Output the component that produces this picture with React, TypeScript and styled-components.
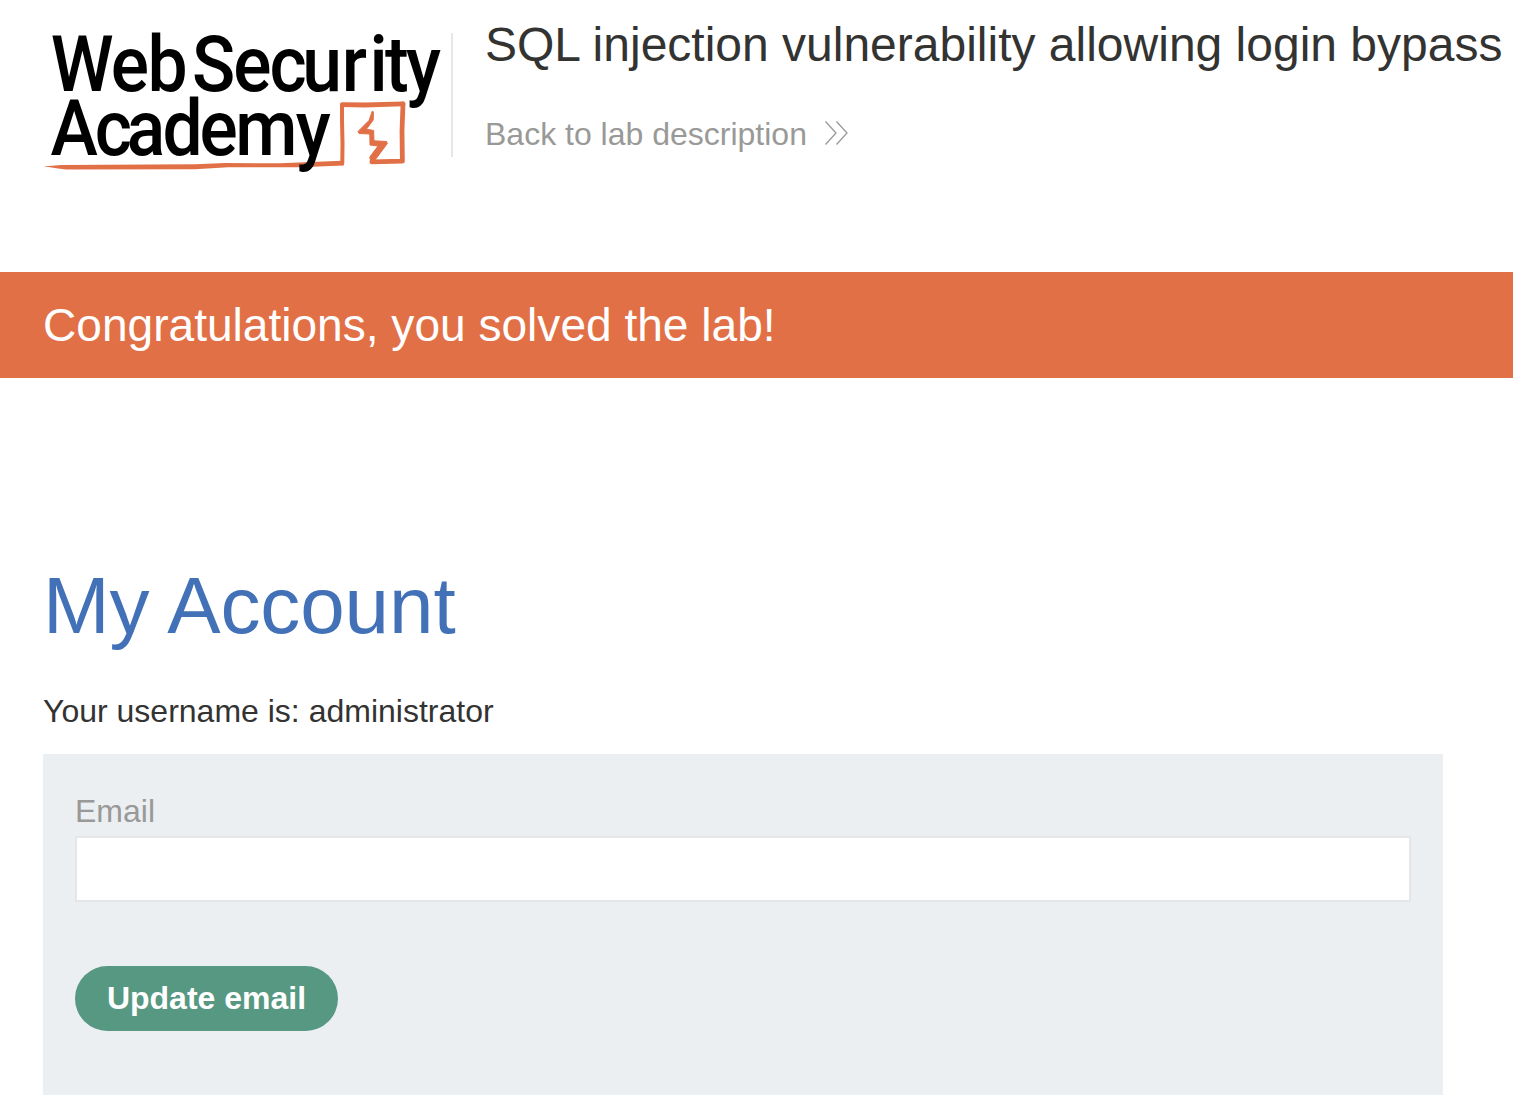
import React from "react";
import styled, { createGlobalStyle } from "styled-components";

const GlobalStyle = createGlobalStyle`
  *, *::before, *::after { box-sizing: border-box; }
  html, body { margin: 0; padding: 0; background: #fff; }
  body {
    font-family: "Liberation Sans", Arial, sans-serif;
    font-size: 32px;
    line-height: 38px;
    color: #333332;
    overflow: hidden;
  }
`;

const Page = styled.div`
  display: flex;
  flex-direction: column;
  height: 1111px;
`;

const Header = styled.header`
  display: flex;
  align-items: flex-start;
  height: 272px;
  padding-left: 43px;
`;

const Logo = styled.svg`
  flex: none;
  width: 400px;
  height: 190px;
`;

const LogoText = styled.text`
  font-family: Roboto, sans-serif;
  font-size: 78px;
  font-weight: 500;
  fill: #000;
`;

const Titles = styled.div`
  flex: none;
  display: flex;
  flex-direction: column;
  margin-left: 8px;
  margin-top: 33px;
  height: 124px;
  border-left: 2px solid #e6e6e6;
  padding-left: 32px;
`;

const Title = styled.h2`
  margin: -16px 0 0;
  font-size: 48px;
  font-weight: 400;
  line-height: 56px;
  white-space: nowrap;
`;

const BackLink = styled.a`
  display: flex;
  align-items: center;
  gap: 17px;
  margin-top: 42px;
  color: #999998;
  white-space: nowrap;
`;

const Chevrons = styled.svg`
  width: 25px;
  height: 26px;
  margin-bottom: 2px;
`;

const Banner = styled.section`
  flex: none;
  display: flex;
  align-items: center;
  height: 106px;
  padding-left: 43px;
  background: #e27046;
  color: #fff;
  font-size: 46.08px;
  line-height: 54px;
`;

const Main = styled.main`
  width: 1400px;
  margin: 182px 0 0 43px;
`;

const Heading = styled.h1`
  margin: 0;
  font-size: 80px;
  font-weight: 400;
  line-height: 92px;
  letter-spacing: -0.1px;
  color: #4271b7;
`;

const Username = styled.p`
  margin: 40px 0 24px;
`;

const Form = styled.form`
  display: flex;
  flex-direction: column;
  align-items: flex-start;
  height: 341px;
  padding: 38px 32px 0;
  background: #ebeff2;
`;

const Label = styled.label`
  color: #999998;
`;

const Input = styled.input`
  width: 100%;
  height: 66px;
  margin: 6px 0 64px;
  padding: 0 16px;
  border: 2px solid #e6e6e6;
  border-radius: 0;
  background: #fff;
  font: inherit;
  outline: none;
`;

const Button = styled.button`
  width: 263px;
  height: 65px;
  padding: 0;
  border: 0;
  border-radius: 33px;
  background: #569881;
  color: #fff;
  font-family: inherit;
  font-size: 32px;
  font-weight: 700;
  line-height: 65px;
`;

/* The wordmark is slightly condensed and kerned letter by letter. */
const CONDENSE = 0.915;
const kern = (edges: number[]) => edges.map((x) => (x / CONDENSE).toFixed(2)).join(" ");

const WEB_SECURITY = kern([50.8, 110.8, 147.5, 192, 233.2, 269.6, 302.2, 341.8, 369.6, 385, 406]);
const ACADEMY = kern([50.5, 94.8, 126.8, 162.4, 199.6, 235.2, 295.8]);

const AcademyLogo = () => (
  <Logo viewBox="43 0 400 190" aria-label="Web Security Academy">
    <path
      fill="#e27046"
      d="M43.5 166.2 Q52 166 61 165 L195 164.3 L225 163 L280 163.3 L342 160.8 L344 165.6 L300 167.3 L228 167.3 L195 169.2 L66 169.4 L58 168.4 Z"
    />
    <g fill="none" stroke="#e27046" strokeLinejoin="round" strokeLinecap="round">
      <path strokeWidth="4" d="M342.3 163.2 L342.5 143 L342 120 L342 105" />
      <path strokeWidth="4.8" d="M342.3 104.6 L365 105 L403 103.8" />
      <path strokeWidth="4.8" d="M403 103.8 L402 131 L402.4 161.2 L371.8 161.8" />
    </g>
    <path
      fill="#e27046"
      stroke="#e27046"
      strokeWidth="1"
      strokeLinejoin="round"
      d="M372.4 111 L373.4 112 L373.2 120 L366.4 129.3 L373.6 130.4 L374 140.8 L386.6 141.5 L387.3 143.5 L376 158.8 L371 163.6 L369.8 157 L378 146 L370 145 L369.8 134 L359 133.5 L358 131.5 L369 120.5 Z"
    />
    <g transform={`scale(${CONDENSE} 1)`}>
      <LogoText x={WEB_SECURITY} y="90.7">
        WebSecurity
      </LogoText>
      <LogoText x={ACADEMY} y="155.5">
        Academy
      </LogoText>
    </g>
  </Logo>
);

export default function App() {
  return (
    <>
      <GlobalStyle />
      <Page>
        <Header>
          <AcademyLogo />
          <Titles>
            <Title>SQL injection vulnerability allowing login bypass</Title>
            <BackLink>
              Back to lab description
              <Chevrons viewBox="0 0 25 26" fill="none" stroke="#999998" strokeWidth="1.3">
                <path d="M1.5 1.5 L12 13 L1.5 24.5 M12.5 1.5 L23 13 L12.5 24.5" />
              </Chevrons>
            </BackLink>
          </Titles>
        </Header>
        <Banner>Congratulations, you solved the lab!</Banner>
        <Main>
          <Heading>My Account</Heading>
          <Username>Your username is: administrator</Username>
          <Form>
            <Label htmlFor="email">Email</Label>
            <Input id="email" type="email" />
            <Button type="button">Update email</Button>
          </Form>
        </Main>
      </Page>
    </>
  );
}
